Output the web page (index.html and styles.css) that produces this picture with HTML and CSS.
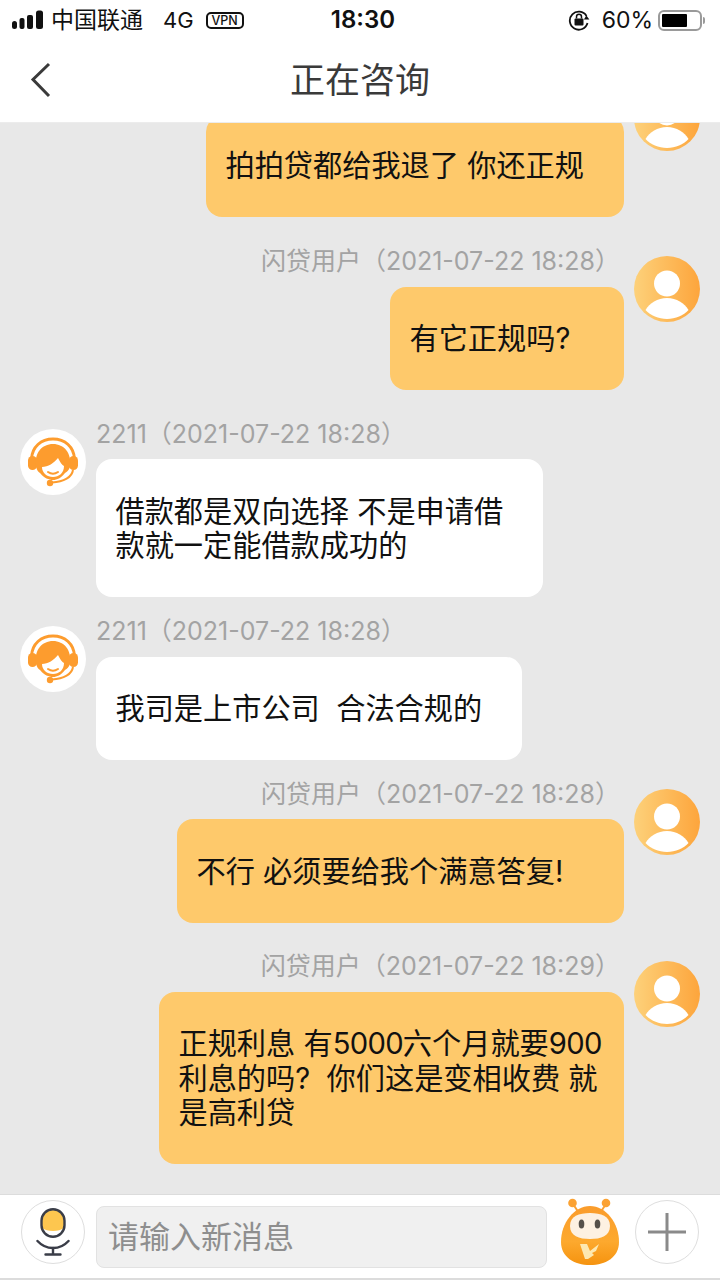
FILE: index.html
```html
<!DOCTYPE html>
<html lang="zh-CN">
<head>
<meta charset="utf-8">
<title>正在咨询</title>
<link rel="stylesheet" href="styles.css">
</head>
<body>
<svg class="defs" width="0" height="0" aria-hidden="true">
  <defs>
    <linearGradient id="userGrad" x1="0" y1="0" x2="1" y2="0">
      <stop offset="0" stop-color="#fdd17a"/><stop offset="1" stop-color="#fda53c"/>
    </linearGradient>
    <linearGradient id="pigGrad" x1="0" y1="0" x2="0" y2="1">
      <stop offset="0" stop-color="#fa9c2c"/><stop offset="0.6" stop-color="#fda92e"/><stop offset="1" stop-color="#f5930f"/>
    </linearGradient>
    <symbol id="user" viewBox="0 0 66 66">
      <circle cx="33" cy="33" r="33" fill="url(#userGrad)"/>
      <circle cx="33" cy="27.5" r="13" fill="#fff"/>
      <path d="M11.500 54c4-7 12-12 21.500-12s17.500 5 21.500 12c-5 5.500-13 9-21.500 9s-16.500-3.500-21.500-9z" fill="#fff"/>
    </symbol>
    <symbol id="agent" viewBox="0 0 66 66">
      <circle cx="33" cy="33" r="33" fill="#fff"/>
      <path d="M11.500 30C12 18 21 10 33 10S54 18 54.500 30" fill="none" stroke="#fd9c2e" stroke-width="3"/>
      <rect x="8" y="27" width="9" height="14" rx="4.500" fill="#fd9c2e"/>
      <rect x="49" y="27" width="9" height="14" rx="4.500" fill="#fd9c2e"/>
      <path d="M16 38C14 24 22 15 33 15S52 24 50 38c-1 3-3 5-5 6-4 5-8 7-12 7s-9-2-13-7c-2-1-3-3-4-6z" fill="#fd9c2e"/>
      <path d="M22 38c6 0 12-4 16-9 2 4 4 7 6 8 0 7-5 11-11 11s-11-4-11-10z" fill="#fff"/>
      <path d="M28 43c3 2 7 2 10 0" fill="none" stroke="#fd9c2e" stroke-width="2" stroke-linecap="round"/>
      <path d="M53 41c-1 7-9 12-21 12.500" fill="none" stroke="#fd9c2e" stroke-width="2"/>
      <circle cx="30" cy="54" r="3.200" fill="#fd9c2e"/>
    </symbol>
  </defs>
</svg>
<div class="app">
  <header class="status">
    <div class="status-left">
      <svg class="signal" width="32" height="20" viewBox="0 0 32 20"><rect x="0" y="11" width="5" height="8" rx="2.500"/><rect x="7.500" y="8" width="5" height="11" rx="2"/><rect x="15" y="5" width="6" height="14" rx="2"/><rect x="24" y="0.500" width="7" height="18.500" rx="2.500"/></svg>
      <span class="carrier">中国联通</span>
      <span class="net">4G</span>
      <span class="vpn">VPN</span>
    </div>
    <div class="time">18:30</div>
    <div class="status-right">
      <svg class="lock" width="22" height="22" viewBox="0 0 22 22"><path d="M18.500 7A9 9 0 1 0 19.500 14" fill="none" stroke="#111" stroke-width="1.800"/><path d="M16 6.500h5.500L19 10.500z" fill="#111" transform="rotate(180 18.700 8.500)"/><rect x="6.500" y="9.500" width="9" height="7" rx="1" fill="#111"/><path d="M8.500 9.500V7.800a2.500 2.500 0 0 1 5 0v1.700" fill="none" stroke="#111" stroke-width="1.500"/></svg>
      <span class="pct">60%</span>
      <div class="battery"><div class="battery-level"></div></div>
      <div class="battery-tip"></div>
    </div>
  </header>
  <nav class="nav">
    <svg class="back" width="22" height="36" viewBox="0 0 22 36"><path d="M19 2 3 17.500 19 34" fill="none" stroke="#3a3a3a" stroke-width="3"/></svg>
    <h1 class="title">正在咨询</h1>
  </nav>
  <main class="chat">
    <section class="row right">
      <div class="body"><div class="meta">闪贷用户（2021-07-22 18:28）</div><div class="bubble first w418">拍拍贷都给我退了 你还正规</div></div>
      <svg class="avatar"><use href="#user"/></svg>
    </section>
    <section class="row right gap-39">
      <div class="body"><div class="meta">闪贷用户（2021-07-22 18:28）</div><div class="bubble w234">有它正规吗?</div></div>
      <svg class="avatar"><use href="#user"/></svg>
    </section>
    <section class="row gap-38">
      <svg class="avatar"><use href="#agent"/></svg>
      <div class="body"><div class="meta">2211（2021-07-22 18:28）</div><div class="bubble agent w447">借款都是双向选择 不是申请借款就一定能借款成功的</div></div>
    </section>
    <section class="row gap-29">
      <svg class="avatar"><use href="#agent"/></svg>
      <div class="body"><div class="meta">2211（2021-07-22 18:28）</div><div class="bubble agent w426">我司是上市公司&nbsp;&nbsp;合法合规的</div></div>
    </section>
    <section class="row right gap-28">
      <div class="body"><div class="meta">闪贷用户（2021-07-22 18:28）</div><div class="bubble w447">不行 必须要给我个满意答复!</div></div>
      <svg class="avatar"><use href="#user"/></svg>
    </section>
    <section class="row right gap-38">
      <div class="body"><div class="meta">闪贷用户（2021-07-22 18:29）</div><div class="bubble w465">正规利息 有<span class="num">5000</span>六个月就要<span class="num">900</span>利息的吗?&nbsp;&nbsp;你们这是变相收费 就是高利贷</div></div>
      <svg class="avatar"><use href="#user"/></svg>
    </section>
  </main>
  <footer class="composer">
    <button class="round" aria-label="语音">
      <svg width="34" height="48" viewBox="0 0 34 48"><path d="M6 13C6 6 11 2 17 2s11 4 11 11v7c-5 4-17 4-22 0z" fill="#fdc64f"/><rect x="5.500" y="1.200" width="23" height="27.600" rx="11.500" fill="none" stroke="#3a3d48" stroke-width="2.400"/><path d="M1.500 33C6 38 12 40 17 40s11-2 15.500-7" fill="none" stroke="#3a3d48" stroke-width="2.400" stroke-linecap="round"/><path d="M17 40v6.500M9.500 46.500h15" fill="none" stroke="#3a3d48" stroke-width="2.400" stroke-linecap="round"/></svg>
    </button>
    <div class="input">请输入新消息</div>
    <svg class="mascot" width="60" height="68" viewBox="0 0 60 68">
      <path d="M19 15 13 6M40 15l6-9" stroke="#fba233" stroke-width="2"/>
      <circle cx="12.500" cy="5" r="4.300" fill="#fba233"/><circle cx="46" cy="5" r="4.300" fill="#fba233"/>
      <path d="M30 8C46 8 59 25 59 44 59 59 46 67 30 67 14 67 1 59 1 44 1 25 14 8 30 8z" fill="url(#pigGrad)"/>
      <path d="M30 15c11 0 20 3 20 13s-9 13-20 13-20-3-20-13 9-13 20-13z" fill="#fdf1e2"/>
      <ellipse cx="21.500" cy="26" rx="2.800" ry="4.500" fill="#55504a"/><ellipse cx="37.500" cy="26" rx="2.800" ry="4.500" fill="#55504a"/>
      <path d="M20 46h7l3 7 9-7-3 7-4 2 2 2-6 4h-3z" fill="#fde8b0"/>
    </svg>
    <button class="round" aria-label="更多">
      <svg width="42" height="42" viewBox="0 0 42 42"><path d="M21 2v38M2 21h38" stroke="#8a8a8a" stroke-width="3"/></svg>
    </button>
  </footer>
</div>
</body>
</html>
```

FILE: styles.css
```css
* { box-sizing: border-box; }
html, body { margin: 0; padding: 0; }
body { font-family: "Inter", "Noto Sans CJK SC", sans-serif; background: #fff; }
.defs { position: absolute; }
.app { width: 720px; height: 1280px; display: flex; flex-direction: column; overflow: hidden; background: #e8e8e8; }

.status { flex: none; height: 40px; background: #fff; display: grid; grid-template-columns: 1fr auto 1fr; align-items: center; color: #111; padding: 0 15px 0 12px; }
.status-left { display: flex; align-items: center; }
.signal { fill: #111; flex: none; }
.carrier { margin-left: 7px; font-size: 23px; line-height: 30px; width: 91px; white-space: nowrap; }
.net { margin-left: 21px; font-size: 22px; line-height: 30px; }
.vpn { margin-left: 12px; width: 38px; height: 17px; border: 2px solid #111; border-radius: 5px; font-size: 12.500px; line-height: 13px; font-weight: 500; text-align: center; }
.time { margin-left: 9px; font-size: 24px; font-weight: 600; line-height: 30px; }
.status-right { display: flex; align-items: center; justify-content: flex-end; }
.lock { flex: none; margin-right: 1px; }
.pct { margin-left: 11px; font-size: 23px; line-height: 30px; }
.battery { margin-left: 5px; width: 44px; height: 21px; border: 2px solid #9a9a9a; border-radius: 6px; padding: 2px; }
.battery-level { width: 25px; height: 13px; background: #000; border-radius: 1px; }
.battery-tip { width: 2px; height: 7px; background: #9a9a9a; border-radius: 0 2px 2px 0; margin-left: 1px; }

.nav { flex: none; height: 83px; padding-bottom: 2px; background: #fff; display: flex; align-items: center; justify-content: center; position: relative; border-bottom: 1px solid #ececec; }
.back { position: absolute; left: 30px; top: 22px; }
.title { margin: 0; font-size: 35px; line-height: 50px; font-weight: 400; color: #3a3a3a; }

.chat { flex: 1; min-height: 0; overflow: hidden; display: flex; flex-direction: column; justify-content: flex-end; padding: 0 20px 30px; }
.row { flex: none; display: flex; justify-content: flex-start; gap: 10px; }
.row.right { justify-content: flex-end; }
.gap-28 { margin-top: 28.500px; }
.gap-29 { margin-top: 29px; }
.gap-38 { margin-top: 38.500px; }
.gap-39 { margin-top: 39.500px; }
.avatar { flex: none; width: 66px; height: 66px; }
.body { display: flex; flex-direction: column; align-items: flex-start; }
.right .body { align-items: flex-end; }
.meta { height: 30.500px; line-height: 10px; font-size: 25px; color: #a3a3a3; white-space: nowrap; }
.right .meta { margin-right: 4px; }
.bubble { padding: 35.500px 20px 33.500px 19.500px; font-size: 29.200px; line-height: 34.500px; color: #111; background: #fec96b; border-radius: 16px; }
.bubble.agent { background: #fff; }
.bubble.first { padding-top: 33px; }
.num { letter-spacing: -0.700px; }
.w234 { width: 234px; }
.w418 { width: 418px; }
.w426 { width: 426px; }
.w447 { width: 447px; }
.w465 { width: 465px; }

.composer { flex: none; height: 86px; background: #fff; border-top: 1px solid #dcdcdc; border-bottom: 2px solid #dcdcdc; display: flex; align-items: flex-start; padding: 0 21px; }
.round { flex: none; width: 64px; height: 64px; margin-top: 5px; padding: 0; border: 1px solid #dedede; border-radius: 50%; background: #fff; display: flex; align-items: center; justify-content: center; }
.input { flex: none; width: 451px; height: 62px; margin-top: 11px; margin-left: 11px; padding-left: 11px; background: #f0f0f0; border: 1px solid #e2e2e2; border-radius: 8px; font-size: 31px; line-height: 60px; color: #8e8e8e; }
.mascot { flex: none; margin-top: 3px; margin-left: 13px; }
.composer .round:last-child { margin-left: 15px; }
```
